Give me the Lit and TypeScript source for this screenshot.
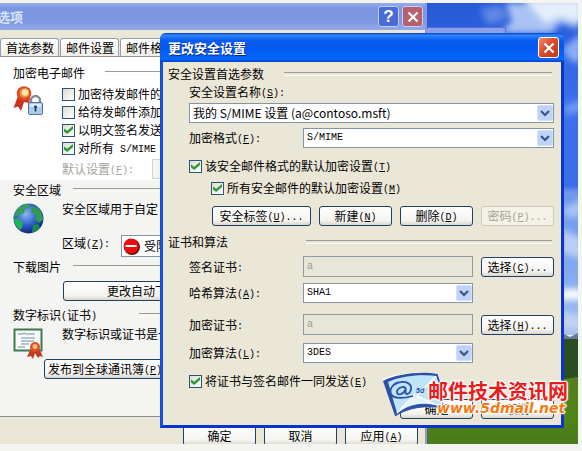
import { LitElement, html, css, svg, TemplateResult } from "lit";
import { customElement } from "lit/decorators.js";

/* Half-width runs are set in a monospace face, and "(X)" underlines its access key. */
function label(text: string): TemplateResult[] {
  const runs = text.match(/[\x20-\x7e]+|[^\x20-\x7e]+/g) ?? [];
  return runs.map((run) => {
    if (!/^[\x20-\x7e]/.test(run)) return html`${run}`;
    const key = /^(.*\()([A-Z])(\).*)$/.exec(run);
    return key
      ? html`<span class="latin">${key[1]}<u>${key[2]}</u>${key[3]}</span>`
      : html`<span class="latin">${run}</span>`;
  });
}

const heading = (text: string, cls = "") =>
  html`<h2 class="heading ${cls}"><span>${label(text)}</span></h2>`;

const check = (text: string, checked: boolean, cls = "") =>
  html`<label class="check ${cls}"
    ><input type="checkbox" .checked=${checked} /><span>${label(text)}</span></label
  >`;

const cross = html`<svg viewBox="0 0 12 12" width="12" height="12" aria-hidden="true">
  <path d="M1.5 1.5 10.5 10.5M10.5 1.5 1.5 10.5" stroke="#fff" stroke-width="2.2" />
</svg>`;

const wallpaper = svg`
  <defs>
    <linearGradient id="sky" x1="0" y1="0" x2="0" y2="1">
      <stop offset="0" stop-color="#2559d8" />
      <stop offset=".3" stop-color="#3c70ea" />
      <stop offset=".55" stop-color="#3b6fe6" />
      <stop offset=".57" stop-color="#6f97ee" />
      <stop offset=".8" stop-color="#82a8ee" />
      <stop offset="1" stop-color="#a6c0ee" />
    </linearGradient>
    <linearGradient id="grass" x1="0" y1="0" x2="0" y2="1">
      <stop offset="0" stop-color="#53801f" />
      <stop offset=".6" stop-color="#4f8415" />
      <stop offset="1" stop-color="#4a7a1c" />
    </linearGradient>
    <filter id="soft"><feGaussianBlur stdDeviation="3" /></filter>
  </defs>
  <rect width="578" height="332" fill="url(#sky)" />
  <g filter="url(#soft)">
    <path d="M505 0H578V26L560 20 552 30H500L512 18Z" fill="#a9c3f4" />
    <path d="M524 -4H582V20L560 14 545 20Z" fill="#e4effb" />
    <path d="M480 6 500 2 508 16 488 22Z" fill="#5f86e6" />
    <path d="M562 46 582 30V60L570 58Z" fill="#8badf4" />
    <path d="M562 104 582 96V108L566 112Z" fill="#6f9af2" />
    <path d="M562 206 582 196V214L566 214Z" fill="#a8c5f6" />
    <path d="M562 226 582 236V256L562 250Z" fill="#bccff6" />
    <path d="M560 286H582V297H560Z" fill="#fafcff" />
    <path d="M562 308 582 314V326H562Z" fill="#c3d2f3" />
  </g>
  <path d="M0 332 562 330 570 334 578 330V441H0Z" fill="#67789a" />
  <path d="M0 336H578V380H0Z" fill="#2c4c22" />
  <path d="M0 376 564 376 578 374V441H0Z" fill="url(#grass)" />
`;

const ribbonLock = html`<svg class="icon" viewBox="0 0 31 31" width="31" height="31" aria-hidden="true">
  <path d="M5 10 0.500 22 5 20.500 8 25 11 16 16 17 17 12Z" fill="#c8341c" />
  <circle cx="11" cy="7.500" r="7.300" fill="#dd4a24" />
  <circle cx="11.500" cy="7" r="5" fill="#ef8c3c" />
  <circle cx="12" cy="6.500" r="3.300" fill="#fde7a4" />
  <path d="M18 17v-2.500a4.500 4.500 0 0 1 9 0v2.500" fill="none" stroke="#7e8a9c" stroke-width="2.400" />
  <rect x="15.500" y="16.500" width="14" height="12" rx="1.500" fill="#a9c9ee" stroke="#54719c" />
  <path d="M17 18h11v3H17z" fill="#d9eafb" />
  <path d="M22.500 19.500v6M21 21h3" stroke="#1f3557" stroke-width="1.600" />
</svg>`;

const globe = html`<svg class="icon" viewBox="0 0 31 31" width="31" height="31" aria-hidden="true">
  <defs>
    <radialGradient id="sea" cx=".42" cy=".35" r=".65">
      <stop offset="0" stop-color="#8cb8f0" />
      <stop offset=".55" stop-color="#2f62cc" />
      <stop offset="1" stop-color="#12257c" />
    </radialGradient>
  </defs>
  <circle cx="15.500" cy="15.500" r="15" fill="url(#sea)" />
  <path d="M3 8C6 3 11 0.800 15 1L17 4 12 6 11 10 6 12 2 14 1 12Z" fill="#3a9c5c" />
  <path d="M1 15 6 16 10 20 9 25 7 27C3 24 1 20 1 15Z" fill="#22b35a" />
  <path d="M19 3 25 5C29 9 30 13 30 17L26 20 22 17 23 12 18 9Z" fill="#2f9a52" />
  <path d="M20 22 25 21 27 24C25 27 22 29 19 29.500Z" fill="#1d8c52" />
</svg>`;

const certificate = html`<svg class="icon" viewBox="0 0 31 31" width="31" height="31" aria-hidden="true">
  <rect x="1.500" y="1.500" width="27" height="21" fill="#f7faf6" stroke="#3f7850" stroke-width="2" />
  <path d="M5 6h5l1-1 2 1h9M8 10h14M8 13h13M8 16h8M5 19h7" stroke="#6c8fae" fill="none" />
  <path d="M18 20 14 29 18 28 20 31 22 25 25 30 27 28 30 29 26 20Z" fill="#c43a20" />
  <circle cx="22" cy="19" r="5" fill="#dc5228" />
  <circle cx="22" cy="18.500" r="2.500" fill="#f9b878" />
</svg>`;

const noEntry = svg`
  <circle cx="9" cy="9" r="8" fill="#6a1010" />
  <circle cx="8" cy="8" r="7.500" fill="#ee0c0c" />
  <path d="M2.500 7h11v2h-11z" fill="#fff" />`;

const envelope = html`<svg class="envelope" viewBox="0 0 62 46" width="62" height="46" aria-hidden="true">
  <path d="M1 7C14 1 40 -1 57 2L61 38C44 32 26 34 13 45Z" fill="#fff" />
  <path d="M5 9C18 4 40 2 54 4L60 36C42 30 26 32 14 42Z" fill="#bfe3f8" />
  <path d="M16 40 34 23 60 36C42 30 28 32 16 40Z" fill="#e4f4fd" />
  <path d="M54 4 35 24 60 36M15 41 33 22" stroke="#fff" stroke-width="1.500" fill="none" />
  <path d="M1 9C14 2 38 -1 56 2L55 4C38 2 18 4 6 10L15 41 13 44Z" fill="#2a50a8" />
  <path d="M13 44C26 32 42 29 61 36C44 33 27 35 13 44Z" fill="#2a50a8" stroke="#2a50a8" />
  <path d="M55 3 59 16" stroke="#2a50a8" stroke-width="2" />
  <path
    d="M24 17C22 13 15 16 15 20 15 24 21 23 24 17C22 23 26 23 28 20 32 13 25 9 19 10 11 11 7 17 9 22 11 26 19 27 31 24"
    fill="none"
    stroke="#2a50a8"
    stroke-width="1.800"
  />
  <text class="tiny" x="34" y="21">5d</text>
</svg>`;

@customElement("app-root")
export class AppRoot extends LitElement {
  static styles = css`
    :host {
      display: block;
      box-sizing: border-box;
      height: 100vh;
      padding: 3px 4px 7px 0;
      background: #f4f4f1;
      color: #000;
      font: 12px/16px "Noto Sans CJK SC", sans-serif;
    }
    * {
      box-sizing: border-box;
    }
    button,
    input,
    select {
      font: inherit;
      color: inherit;
      margin: 0;
    }
    svg {
      display: block;
      flex: none;
    }
    .latin {
      font: 10px/1px "Liberation Mono", monospace;
      vertical-align: 1px;
      white-space: pre;
    }
    .desktop {
      position: relative;
      height: 100%;
      overflow: hidden;
    }
    .wallpaper {
      width: 100%;
      height: 100%;
    }
    .behind {
      position: absolute;
      top: 24px;
      right: 72px;
      width: 80px;
      height: 20px;
      border: 1px solid #5a6fc8;
      border-radius: 3px;
      background: #8ba0ea;
    }

    /* windows */
    .options {
      position: absolute;
      inset: 0 151px 0 0;
      display: flex;
      flex-direction: column;
      border-right: 2px solid #8c97da;
      background: #ebe7d7;
      white-space: nowrap;
    }
    .titlebar {
      display: flex;
      align-items: center;
      gap: 3px;
    }
    .titlebar h1 {
      flex: 1;
      margin: 0;
      font-size: 13px;
      line-height: 16px;
      font-weight: bold;
    }
    .options .titlebar {
      height: 27px;
      flex: none;
      padding-right: 2px;
      background: linear-gradient(#98adec, #7b95e0 20%, #7f98e4 70%, #93a9ec);
      color: #dbe5fb;
    }
    .options .titlebar h1 {
      margin-left: -3px;
    }
    .glyph {
      display: grid;
      place-items: center;
      width: 21px;
      height: 21px;
      padding: 0;
      border: 1px solid #c4d0f6;
      border-radius: 3px;
      color: #fff;
    }
    .help {
      background: #4a6bd6;
      font: bold 17px/18px "Liberation Sans", sans-serif;
    }
    .dim {
      background: #b5606c;
    }
    .close {
      background: linear-gradient(135deg, #ee8a6c, #d8482a 50%, #c03a1c);
      border-color: #fff;
    }
    .dialog {
      position: absolute;
      inset: 30px 14px auto 160px;
      border: 3px solid #0a35cc;
      border-top: 0;
      border-left-color: #1450dc;
      border-radius: 6px 6px 0 0;
      background: #ebe7d7;
      white-space: nowrap;
    }
    .dialog .titlebar {
      height: 29px;
      margin: 0 -3px;
      padding: 0 5px 0 8px;
      border-radius: 6px 6px 0 0;
      background: linear-gradient(#0a3fc4, #2f86ff 8%, #0a5cf0 25%, #0458ee 50%, #0568ff 90%, #0340c8);
      color: #fff;
      text-shadow: 1px 1px #0a2a8c;
    }

    /* shared controls */
    .heading {
      display: flex;
      align-items: center;
      gap: 42px;
      margin: 0;
      height: 16px;
      font-size: 12px;
      font-weight: normal;
    }
    .heading::after {
      content: "";
      flex: 1;
      height: 2px;
      border-top: 1px solid #9c9c94;
      border-bottom: 1px solid #fafaf8;
    }
    .heading.near {
      gap: 20px;
    }
    .heading.close-rule {
      gap: 12px;
    }
    .heading.far {
      gap: 78px;
    }
    .check {
      display: flex;
      align-items: center;
      gap: 3px;
      height: 14px;
    }
    .check input {
      appearance: none;
      display: grid;
      place-items: center;
      width: 13px;
      height: 13px;
      border: 1px solid #2d5478;
      background: linear-gradient(135deg, #dddcd4, #fff);
    }
    .check input:checked::before {
      content: "";
      width: 9px;
      height: 8px;
      background: #2f9a38;
      clip-path: polygon(0 30%, 35% 60%, 100% 0, 100% 38%, 35% 100%, 0 68%);
    }
    .btn {
      height: 20px;
      padding: 0;
      border: 1px solid #1f3f66;
      border-radius: 3px;
      background: linear-gradient(#fff, #f4f3ee 75%, #dad6cc);
      line-height: 16px;
      white-space: nowrap;
    }
    .btn:disabled {
      border-color: #cbc8ba;
      background: #f3f1e8;
      color: #a5a497;
    }
    .drop {
      display: grid;
      height: 20px;
      align-items: center;
    }
    .drop > * {
      grid-area: 1 / 1;
    }
    .drop select {
      appearance: none;
      width: 100%;
      height: 20px;
      padding: 0 20px 0 3px;
      border: 1px solid #8495a8;
      border-radius: 0;
      background: #fff;
    }
    .drop .mono {
      font: 10px/16px "Liberation Mono", monospace;
    }
    .drop svg {
      justify-self: end;
      margin-right: 1px;
      pointer-events: none;
    }
    .field {
      width: 100%;
      height: 21px;
      padding: 0 3px;
      border: 1px solid #8d9d9f;
      background: #e8e6d8;
      color: #9c9b8e;
      font: 10px/16px "Liberation Mono", monospace;
    }

    /* options window */
    .tabs {
      display: flex;
      flex: none;
      gap: 1px;
      padding-top: 8px;
      height: 26px;
    }
    .tab {
      height: 18px;
      width: 59px;
      padding: 0 5px;
      border: 1px solid #96a0a8;
      border-bottom: 0;
      border-radius: 3px 3px 0 0;
      background: linear-gradient(#fff, #f0eee6);
      line-height: 16px;
      text-align: left;
      white-space: nowrap;
    }
    .panel {
      flex: none;
      padding: 8px 13px 37px;
      border-top: 1px solid #8b9297;
      border-bottom: 1px solid #8f8f8a;
      background: linear-gradient(#fff 123px, #f4f4f2 123px);
    }
    .section {
      display: grid;
      grid-template-columns: 31px 1fr;
      column-gap: 18px;
    }
    .stack {
      display: flex;
      flex-direction: column;
      gap: 4px;
      padding-top: 6px;
    }
    .icon {
      margin-top: 5px;
    }
    .inline {
      display: flex;
      align-items: center;
    }
    .muted {
      height: 20px;
      color: #a3a39b;
      gap: 18px;
    }
    .muted .drop {
      flex: 1;
    }
    .muted select {
      background: #f0efe8;
      border-color: #c4c3b8;
    }
    .security {
      margin-top: 3px;
    }
    .zone {
      align-items: flex-start;
      gap: 11px;
      height: 22px;
      margin-top: 18px;
    }
    .zone .drop {
      flex: 1;
      height: 22px;
    }
    .zone .drop select {
      height: 22px;
      padding-left: 22px;
    }
    .zone .drop .stop {
      justify-self: start;
      margin-left: 2px;
    }
    .pictures {
      margin-top: 2px;
    }
    .auto {
      display: block;
      width: 220px;
      margin: 6px 0 6px 50px;
      padding-left: 43px;
      text-align: left;
    }
    .publish {
      display: block;
      width: 140px;
      margin-left: 31px;
      padding-left: 3px;
      text-align: left;
    }
    .digital {
      min-height: 36px;
    }
    .digital p,
    .region p {
      margin: 3px 0 0;
    }
    .actions {
      display: flex;
      justify-content: flex-end;
      gap: 8px;
      padding: 8px 7px 0 0;
    }
    .actions .btn {
      flex: none;
      width: 73px;
      height: 21px;
    }

    /* security dialog */
    .body {
      display: flex;
      flex-direction: column;
      padding: 4px 9px 6px 5px;
    }
    .indent {
      margin-left: 21px;
      margin-right: -2px;
    }
    .name {
      height: 16px;
      margin-top: 2px;
      margin-bottom: 3px;
    }
    .row {
      display: grid;
      grid-template-columns: 114px 1fr;
      align-items: center;
      margin-top: 5px;
    }
    .cert {
      grid-template-columns: 114px 1fr 73px;
      margin-top: 6px;
    }
    .cert .field,
    .cert .drop {
      width: auto;
      margin-right: 8px;
    }
    .gap-s {
      margin-top: 8px;
    }
    .gap-m {
      margin-top: 11px;
    }
    .buttons {
      display: grid;
      grid-template-columns: 99px 73px 73px 73px;
      gap: 8px;
      justify-content: end;
      margin-top: 11px;
    }
    .deeper {
      margin-left: 43px;
    }
    .confirm {
      grid-template-columns: 73px 73px;
    }

    /* site mark over the lower right corner */
    .mark {
      position: absolute;
      right: 7px;
      bottom: 26px;
      display: grid;
      grid-template-columns: 46px 143px;
      align-items: end;
      pointer-events: none;
    }
    .envelope {
      overflow: visible;
    }
    .tiny {
      fill: #2a50a8;
      font: italic bold 7px "Liberation Sans", sans-serif;
    }
    .words {
      position: relative;
      display: flex;
      flex-direction: column;
      padding-bottom: 3px;
      font-weight: bold;
      text-shadow: 1px 0 #fff, -1px 0 #fff, 0 1px #fff, 0 -1px #fff, 0 0 2px #fff, 0 0 3px #fff, 0 0 3px #fff;
      white-space: nowrap;
    }
    .site {
      color: #e81c1c;
      font-size: 20px;
      line-height: 20px;
    }
    .url {
      margin-left: 9px;
      color: #f47a14;
      font: italic bold 14px/14px "DejaVu Sans", sans-serif;
    }
  `;

  private drop(id: string, text: string, mono = true, disabled = false) {
    return html`<div class="drop">
      <select id=${id} class=${mono ? "mono" : ""} ?disabled=${disabled}>
        <option>${text}</option>
      </select>
      <svg viewBox="0 0 16 18" width="16" height="18" aria-hidden="true">
        <rect x=".5" y="1.500" width="15" height="15" rx="1.500" fill="#bfd3f8" stroke="#d2e0fb" />
        <path d="M4 7 8 11 12 7" fill="none" stroke="#3c5482" stroke-width="2.200" />
      </svg>
    </div>`;
  }

  private optionsWindow() {
    return html`<section class="options" aria-label="选项">
      <header class="titlebar">
        <h1>选项</h1>
        <button class="glyph help">?</button>
        <button class="glyph dim" aria-label="关闭">${cross}</button>
      </header>
      <nav class="tabs">
        ${["首选参数", "邮件设置", "邮件格"].map((t) => html`<button class="tab">${t}</button>`)}
      </nav>
      <div class="panel">
        ${heading("加密电子邮件", "near")}
        <div class="section">
          ${ribbonLock}
          <div class="stack">
            ${check("加密待发邮件的", false)} ${check("给待发邮件添加", false)}
            ${check("以明文签名发送", true)} ${check("对所有 S/MIME", true)}
            <div class="inline muted">
              <label for="default">${label("默认设置(F):")}</label>
              ${this.drop("default", "", false, true)}
            </div>
          </div>
        </div>
        ${heading("安全区域", "close-rule security")}
        <div class="section region">
          ${globe}
          <div>
            <p>安全区域用于自定</p>
            <div class="inline zone">
              <label for="zone">${label("区域(Z):")}</label>
              <div class="drop">
                <select id="zone">
                  <option>受限</option>
                </select>
                <svg class="stop" viewBox="0 0 17 17" width="17" height="17" aria-hidden="true">
                  ${noEntry}
                </svg>
              </div>
            </div>
          </div>
        </div>
        ${heading("下载图片", "close-rule pictures")}
        <button class="btn auto">更改自动下</button>
        ${heading("数字标识(证书)")}
        <div class="section digital">
          ${certificate}
          <p>数字标识或证书是一</p>
        </div>
        <button class="btn publish">${label("发布到全球通讯簿(P)")}</button>
      </div>
      <footer class="actions">
        <button class="btn">确定</button>
        <button class="btn">取消</button>
        <button class="btn">${label("应用(A)")}</button>
      </footer>
    </section>`;
  }

  private dialog() {
    return html`<section class="dialog" role="dialog" aria-label="更改安全设置">
      <header class="titlebar">
        <h1>更改安全设置</h1>
        <button class="glyph close" aria-label="关闭">${cross}</button>
      </header>
      <div class="body">
        ${heading("安全设置首选参数", "near")}
        <label class="indent name" for="name">${label("安全设置名称(S):")}</label>
        <div class="indent">${this.drop("name", "我的 S/MIME 设置 (a@contoso.msft)", false)}</div>
        <div class="row indent">
          <label for="format">${label("加密格式(F):")}</label>
          ${this.drop("format", "S/MIME")}
        </div>
        ${check("该安全邮件格式的默认加密设置(T)", true, "indent gap-m")}
        ${check("所有安全邮件的默认加密设置(M)", true, "deeper gap-s")}
        <div class="buttons indent">
          <button class="btn">${label("安全标签(U)...")}</button>
          <button class="btn">${label("新建(N)")}</button>
          <button class="btn">${label("删除(D)")}</button>
          <button class="btn" disabled>${label("密码(P)...")}</button>
        </div>
        ${heading("证书和算法", "far gap-s")}
        <div class="row cert indent">
          <label for="sign">${label("签名证书:")}</label>
          <input class="field" id="sign" value="a" disabled />
          <button class="btn">${label("选择(C)...")}</button>
        </div>
        <div class="row cert indent">
          <label for="hash">${label("哈希算法(A):")}</label>
          ${this.drop("hash", "SHA1")}
        </div>
        <div class="row cert indent gap-m">
          <label for="enc">${label("加密证书:")}</label>
          <input class="field" id="enc" value="a" disabled />
          <button class="btn">${label("选择(H)...")}</button>
        </div>
        <div class="row cert indent gap-s">
          <label for="algo">${label("加密算法(L):")}</label>
          ${this.drop("algo", "3DES")}
        </div>
        ${check("将证书与签名邮件一同发送(E)", true, "indent gap-m")}
        <div class="buttons confirm indent">
          <button class="btn">确定</button>
          <button class="btn">取消</button>
        </div>
      </div>
    </section>`;
  }

  render() {
    return html`<main class="desktop">
      <svg class="wallpaper" viewBox="0 0 578 441" preserveAspectRatio="none" aria-hidden="true">
        ${wallpaper}
      </svg>
      <div class="behind"></div>
      ${this.optionsWindow()} ${this.dialog()}
      <div class="mark">
        ${envelope}
        <div class="words">
          <span class="site">邮件技术资讯网</span>
          <span class="url">www.5dmail.net</span>
        </div>
      </div>
    </main>`;
  }
}
